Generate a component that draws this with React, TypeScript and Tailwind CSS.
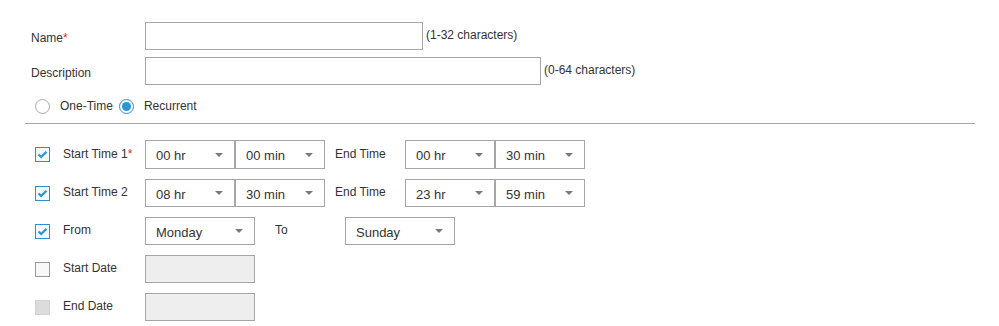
import React from 'react';

type SelectProps = {
  value: string;
  width: string;
  tall?: boolean;
};

const Select = (props: SelectProps) => {
  return (
    <div
      className={`${props.width} ${props.tall ? 'h-[29px]' : 'h-[28px]'} border border-[#a6a6a6] bg-white flex items-center justify-between pl-[10px] pr-[11px]`}
    >
      <span className="text-[13px] text-[#333] pt-[3px]">{props.value}</span>
      <span className="w-0 h-0 border-l-[4px] border-r-[4px] border-t-[4px] border-l-transparent border-r-transparent border-t-[#7a7a7a]" />
    </div>
  );
};

type CheckProps = {
  state: 'checked' | 'empty' | 'disabled';
};

const Check = (props: CheckProps) => {
  if (props.state === 'checked') {
    return (
      <div className="w-[15px] h-[15px] border border-[#2b8fd2] bg-[#f2f8fc] flex items-center justify-center shrink-0">
        <svg width="11" height="9" viewBox="0 0 11 9">
          <path d="M1.5 4.5 L4.2 7 L9.5 1.8" fill="none" stroke="#2b95d6" strokeWidth="2.2" />
        </svg>
      </div>
    );
  }
  if (props.state === 'disabled') {
    return <div className="w-[15px] h-[15px] border border-[#d2d2d2] bg-[#dcdcdc] shrink-0" />;
  }
  return <div className="w-[15px] h-[15px] border border-[#9a9a9a] bg-[#f8f8f8] shrink-0" />;
};

const Label = ({ children }: { children: React.ReactNode }) => (
  <div className="w-[82px] ml-[13px] pb-[2px] text-[12px] text-[#333]">{children}</div>
);

export default function App() {
  return (
    <div className="w-[999px] h-[326px] bg-white overflow-hidden font-['Liberation_Sans',Arial,sans-serif] text-[12px] text-[#333]">
      {/* basic info */}
      <div className="pl-[31px] pt-[22px]">
        <div className="flex items-center">
          <div className="w-[114px] pt-[3px]">
            Name<span className="text-[#e8262b]">*</span>
          </div>
          <div className="w-[278px] h-[28px] border border-[#a6a6a6] bg-white" />
          <span className="ml-[3px] -mt-[3px]">(1-32 characters)</span>
        </div>
        <div className="flex items-center mt-[7px]">
          <div className="w-[114px] pt-[3px]">Description</div>
          <div className="w-[396px] h-[28px] border border-[#a6a6a6] bg-white" />
          <span className="ml-[3px] -mt-[3px]">(0-64 characters)</span>
        </div>
        <div className="flex items-center mt-[12px] ml-[4px]">
          <div className="w-[15px] h-[15px] rounded-full border border-[#a8a8a8] bg-white" />
          <span className="ml-[10px]">One-Time</span>
          <div className="ml-[6px] w-[15px] h-[15px] rounded-full border border-[#2b8fd2] bg-white flex items-center justify-center">
            <div className="w-[9px] h-[9px] rounded-full bg-[#2b95d6]" />
          </div>
          <span className="ml-[10px]">Recurrent</span>
        </div>
      </div>

      <div className="ml-[25px] w-[950px] h-px bg-[#a6a6a6] mt-[8px]" />

      {/* schedule */}
      <div className="pl-[35px] mt-[16px] flex flex-col gap-[10px]">
        <div className="flex items-center">
          <Check state="checked" />
          <Label>
            Start Time 1<span className="text-[#e8262b]">*</span>
          </Label>
          <Select value="00 hr" width="w-[90px]" tall />
          <Select value="00 min" width="w-[90px]" tall />
          <div className="ml-[10px] w-[70px] pb-[2px]">End Time</div>
          <Select value="00 hr" width="w-[90px]" tall />
          <Select value="30 min" width="w-[90px]" tall />
        </div>
        <div className="flex items-center">
          <Check state="checked" />
          <Label>Start Time 2</Label>
          <Select value="08 hr" width="w-[90px]" />
          <Select value="30 min" width="w-[90px]" />
          <div className="ml-[10px] w-[70px] pb-[2px]">End Time</div>
          <Select value="23 hr" width="w-[90px]" />
          <Select value="59 min" width="w-[90px]" />
        </div>
        <div className="flex items-center">
          <Check state="checked" />
          <Label>From</Label>
          <Select value="Monday" width="w-[110px]" />
          <div className="ml-[20px] w-[70px] pb-[2px]">To</div>
          <Select value="Sunday" width="w-[110px]" />
        </div>
        <div className="flex items-center">
          <Check state="empty" />
          <Label>Start Date</Label>
          <div className="w-[110px] h-[28px] border border-[#a6a6a6] bg-[#eeeeee]" />
        </div>
        <div className="flex items-center">
          <Check state="disabled" />
          <Label>End Date</Label>
          <div className="w-[110px] h-[28px] border border-[#a6a6a6] bg-[#eeeeee]" />
        </div>
      </div>
    </div>
  );
}
